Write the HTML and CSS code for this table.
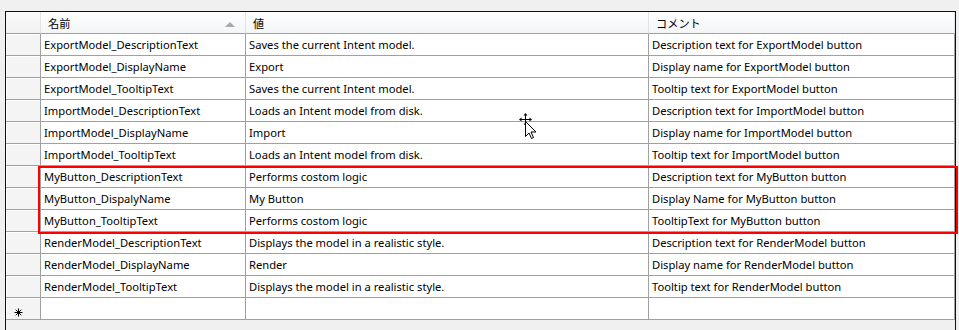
FILE: index.html
```html
<!DOCTYPE html>
<html lang="ja">
<head>
    <meta charset="UTF-8">
    <title>リソース エディター</title>
    <link rel="stylesheet" href="styles.css">
</head>
<body>
    <div class="frame">
        <div class="grid">
            <div class="hd hd-corner"></div>
            <div class="hd">名前<span class="sort-arrow"></span></div>
            <div class="hd">値</div>
            <div class="hd">コメント</div>

            <div class="rh"></div><div class="cell">ExportModel_DescriptionText</div><div class="cell">Saves the current Intent model.</div><div class="cell">Description text for ExportModel button</div>
            <div class="rh"></div><div class="cell">ExportModel_DisplayName</div><div class="cell">Export</div><div class="cell">Display name for ExportModel button</div>
            <div class="rh"></div><div class="cell">ExportModel_TooltipText</div><div class="cell">Saves the current Intent model.</div><div class="cell">Tooltip text for ExportModel button</div>
            <div class="rh"></div><div class="cell">ImportModel_DescriptionText</div><div class="cell">Loads an Intent model from disk.</div><div class="cell">Description text for ImportModel button</div>
            <div class="rh"></div><div class="cell">ImportModel_DisplayName</div><div class="cell">Import</div><div class="cell">Display name for ImportModel button</div>
            <div class="rh"></div><div class="cell">ImportModel_TooltipText</div><div class="cell">Loads an Intent model from disk.</div><div class="cell">Tooltip text for ImportModel button</div>
            <div class="rh"></div><div class="cell">MyButton_DescriptionText</div><div class="cell">Performs costom logic</div><div class="cell">Description text for MyButton button</div>
            <div class="rh"></div><div class="cell">MyButton_DispalyName</div><div class="cell">My Button</div><div class="cell">Display Name for MyButton button</div>
            <div class="rh"></div><div class="cell">MyButton_TooltipText</div><div class="cell">Performs costom logic</div><div class="cell">TooltipText for MyButton button</div>
            <div class="rh"></div><div class="cell">RenderModel_DescriptionText</div><div class="cell">Displays the model in a realistic style.</div><div class="cell">Description text for RenderModel button</div>
            <div class="rh"></div><div class="cell">RenderModel_DisplayName</div><div class="cell">Render</div><div class="cell">Display name for RenderModel button</div>
            <div class="rh"></div><div class="cell">RenderModel_TooltipText</div><div class="cell">Displays the model in a realistic style.</div><div class="cell">Tooltip text for RenderModel button</div>

            <!-- new row -->
            <div class="rh">
                <svg class="new-row" width="9" height="9" viewBox="0 0 9 9">
                    <path d="M4.5 0.5v8M0.5 4.5h8M1.7 1.7l5.6 5.6M7.3 1.7l-5.6 5.6" stroke="#000" stroke-width="1" fill="none"/>
                </svg>
            </div>
            <div class="cell"></div><div class="cell"></div><div class="cell"></div>
        </div>

        <!-- selection outline around the MyButton rows -->
        <div class="highlight"></div>

        <!-- move cursor -->
        <svg class="cursor" width="22" height="28" viewBox="0 0 22 28">
            <path d="M7.5 1v11M2 6.5h11" stroke="#000" stroke-width="1" fill="none"/>
            <path d="M7.5 0L5.5 2.5h4z M7.5 13L5.5 10.5h4z M1 6.5L3.5 4.5v4z M14 6.5L11.5 4.5v4z" fill="#000"/>
            <path d="M7.5 8.5v15l3.5-3.5 2.5 5.5 2-1-2.5-5.5h5z" fill="#fff" stroke="#000" stroke-width="1" stroke-linejoin="miter"/>
        </svg>
    </div>
</body>
</html>
```

FILE: styles.css
```css
* {
    margin: 0;
    padding: 0;
    box-sizing: border-box;
}

body {
    background: #f0f0f0;
    font-family: 'Segoe UI', 'Noto Sans', 'Noto Sans CJK JP', sans-serif;
    font-size: 11.2px;
    color: #000;
    height: 330px;
    overflow: hidden;
}

.frame {
    position: relative;
    margin: 11px 0 0 5px;
    width: 951px;
    height: 319px;
    border: 1px solid #111;
    border-bottom: none;
    background: #f0f0f0;
}

.grid {
    display: grid;
    grid-template-columns: 35px 205px 403px 306px;
    grid-auto-rows: 22px;
    background: #fff;
}

.hd {
    display: flex;
    align-items: center;
    justify-content: space-between;
    padding: 1px 10px 0 7px;
    background: linear-gradient(#ffffff, #f4f5f7);
    border-right: 1px solid #e3e3e3;
    border-bottom: 1px solid #a0a0a0;
    white-space: nowrap;
}

.hd-corner {
    background: linear-gradient(#fbfbfb, #f1f1f1);
}

.sort-arrow {
    width: 0;
    height: 0;
    border-left: 5px solid transparent;
    border-right: 5px solid transparent;
    border-bottom: 5px solid #a9a9a9;
    margin-top: 2px;
}

.rh {
    display: flex;
    align-items: center;
    padding-left: 8px;
    background: #f4f4f4;
    border-right: 1px solid #a0a0a0;
    border-bottom: 1px solid #a0a0a0;
    box-shadow: inset 1px 1px 0 #fff;
}

.cell {
    padding: 1px 3px 0;
    line-height: 20px;
    border-right: 1px solid #a0a0a0;
    border-bottom: 1px solid #a0a0a0;
    white-space: nowrap;
    overflow: hidden;
}

.new-row {
    display: block;
    margin-top: 8px;
}

.highlight {
    position: absolute;
    left: 32px;
    top: 154px;
    width: 920px;
    height: 68px;
    border: 2px solid #ff0000;
    pointer-events: none;
}

.cursor {
    position: absolute;
    left: 512px;
    top: 101px;
}
```
